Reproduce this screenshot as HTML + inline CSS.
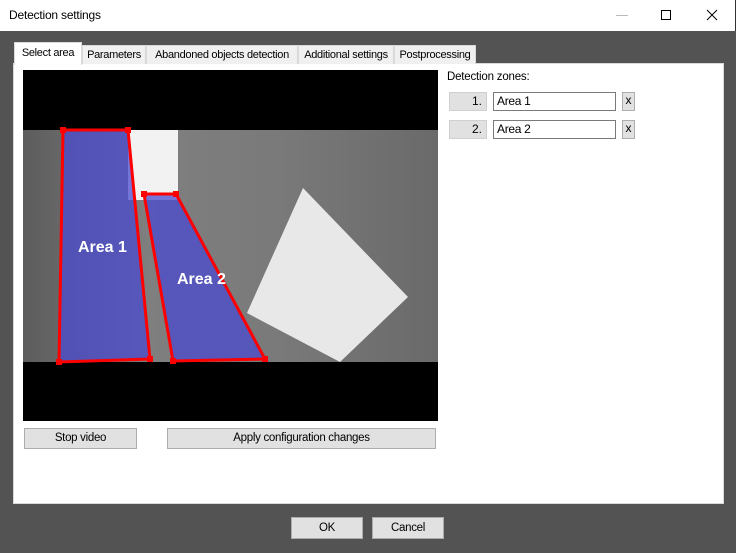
<!DOCTYPE html>
<html><head><style>
body{margin:0;width:736px;height:553px;background:#535353;font-family:"Liberation Sans",sans-serif;font-size:12px;position:relative;overflow:hidden}
.title{position:absolute;left:0;top:0;width:735px;height:31px;background:#fff;border-right:1px solid #333}
.title span{position:absolute;left:9px;top:8px;font-size:12px;color:#000;letter-spacing:-0.2px}
.tab{position:absolute;top:45px;height:18px;background:#f0f0f0;border:1px solid #d9d9d9;border-bottom:none;font-size:11px;letter-spacing:-0.3px;line-height:18px;text-align:center;color:#000}
.panel{position:absolute;left:13px;top:63px;width:709px;height:439px;background:#fff;border:1px solid #d9d9d9}
.btn{position:absolute;background:#e1e1e1;border:1px solid #adadad;text-align:center;font-size:11.5px;letter-spacing:-0.3px;box-sizing:border-box}
.num{position:absolute;background:#e1e1e1;border:1px solid #d0d0d0;text-align:right;padding-right:4px;box-sizing:border-box;height:19px;line-height:17px}
.inp{position:absolute;border:1px solid #7a7a7a;background:#fff;height:19px;box-sizing:border-box;padding-left:3px;line-height:17px;letter-spacing:-0.3px}
.x{position:absolute;width:13px;height:19px;background:#e1e1e1;border:1px solid #adadad;box-sizing:border-box;text-align:center;line-height:15px}
</style></head><body>
<div class="title"><span>Detection settings</span>
<svg style="position:absolute;left:600px;top:0" width="136" height="31"><line x1="16" y1="15.5" x2="28" y2="15.5" stroke="#bbb"/><rect x="61.5" y="10.5" width="9" height="9" fill="none" stroke="#000"/><path d="M107 10 L117 20 M117 10 L107 20" stroke="#000"/></svg></div>
<div class="panel"></div>
<div class="tab" style="left:82px;width:62px">Parameters</div>
<div class="tab" style="left:146px;width:150px">Abandoned objects detection</div>
<div class="tab" style="left:298px;width:94px">Additional settings</div>
<div class="tab" style="left:394px;width:80px">Postprocessing</div>
<div class="tab" style="left:14px;top:42px;height:22px;width:66px;background:#fff;line-height:20px">Select area</div>
<svg style="position:absolute;left:23px;top:70px" width="415" height="351">
<rect width="415" height="351" fill="#000"/>
<defs><linearGradient id="g" x1="0" x2="1"><stop offset="0" stop-color="#5c5c5c"/><stop offset="0.3" stop-color="#7f7f7f"/><stop offset="0.6" stop-color="#7a7a7a"/><stop offset="1" stop-color="#6a6a6a"/></linearGradient></defs>
<rect x="0" y="60" width="415" height="232" fill="url(#g)"/>
<rect x="105" y="60" width="50" height="70" fill="#f2f2f2"/>
<path d="M280 118 L385 227 L317 292 L224 243 Z" fill="#e8e8e8"/>
<polygon points="40,60 105,60 127,289 36,292" fill="#4a4ad0" fill-opacity="0.75" stroke="#f00" stroke-width="3"/>
<polygon points="121,124 153,124 242,289 150,291" fill="#4a4ad0" fill-opacity="0.75" stroke="#f00" stroke-width="3"/>
<g fill="#f00"><rect x="37" y="57" width="6" height="6"/><rect x="102" y="57" width="6" height="6"/><rect x="124" y="286" width="6" height="6"/><rect x="33" y="289" width="6" height="6"/><rect x="118" y="121" width="6" height="6"/><rect x="150" y="121" width="6" height="6"/><rect x="239" y="286" width="6" height="6"/><rect x="147" y="288" width="6" height="6"/></g>
<text x="55" y="182" fill="#fff" font-weight="bold" font-size="16" font-family="Liberation Sans">Area 1</text>
<text x="154" y="214" fill="#fff" font-weight="bold" font-size="16" font-family="Liberation Sans">Area 2</text>
</svg>
<div class="btn" style="left:24px;top:428px;width:113px;height:21px;line-height:19px">Stop video</div>
<div class="btn" style="left:167px;top:428px;width:269px;height:21px;line-height:19px">Apply configuration changes</div>
<div style="position:absolute;left:447px;top:71px;font-size:11.5px;letter-spacing:-0.2px">Detection zones:</div>
<div class="num" style="left:449px;top:92px;width:38px">1.</div>
<div class="inp" style="left:493px;top:92px;width:123px">Area 1</div>
<div class="x" style="left:622px;top:92px">x</div>
<div class="num" style="left:449px;top:120px;width:38px">2.</div>
<div class="inp" style="left:493px;top:120px;width:123px">Area 2</div>
<div class="x" style="left:622px;top:120px">x</div>
<div class="btn" style="left:291px;top:517px;width:72px;height:22px;line-height:20px">OK</div>
<div class="btn" style="left:372px;top:517px;width:72px;height:22px;line-height:20px">Cancel</div>
</body></html>
